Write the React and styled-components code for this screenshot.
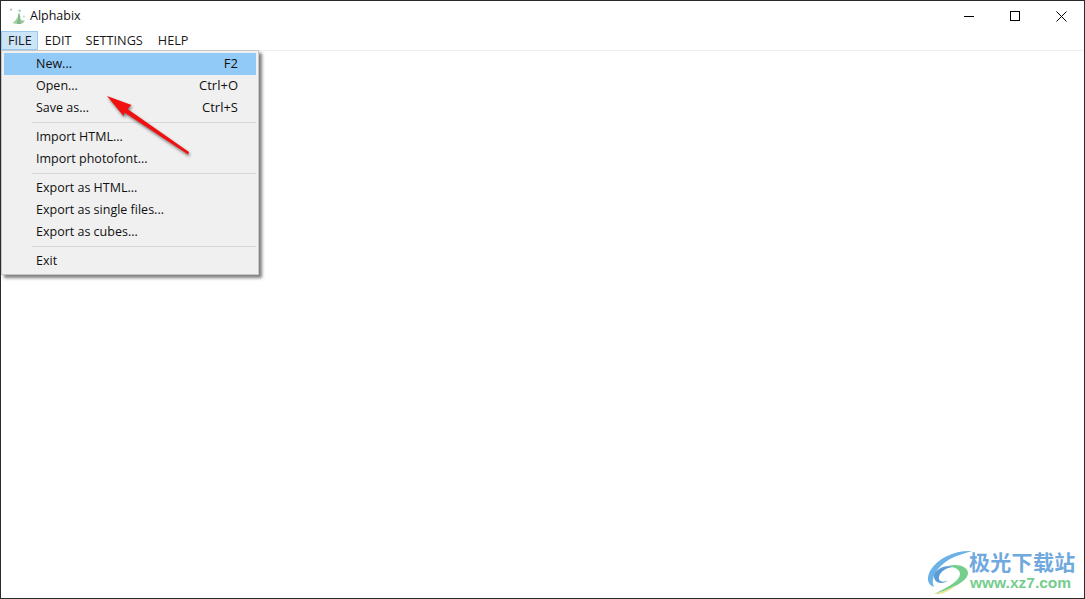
import React from "react";
import styled, { createGlobalStyle } from "styled-components";

const Global = createGlobalStyle`
  html, body { margin: 0; padding: 0; background: #fff; overflow: hidden; }
  * { box-sizing: border-box; }
`;

const Win = styled.div`
  position: relative;
  width: 1085px;
  height: 599px;
  background: #fff;
  border: 1px solid #2b2b2b;
  font-family: "Open Sans", "Noto Sans", sans-serif;
  font-size: 12.5px;
  color: #1a1a1a;
  overflow: hidden;
`;
const TitleBar = styled.header`
  display: flex;
  align-items: center;
  height: 30px;
`;
const AppIcon = styled.svg`
  width: 17px;
  height: 17px;
  margin-left: 8px;
  margin-top: 1px;
`;
const Title = styled.span`
  margin-left: 4px;
  margin-top: -1px;
  font-size: 12.5px;
  color: #111;
`;
const WinButtons = styled.div`
  margin-left: auto;
  display: flex;
`;
const WinButton = styled.div`
  width: 46px;
  height: 30px;
  display: flex;
  align-items: center;
  justify-content: center;
`;
const MenuBar = styled.nav`
  display: flex;
  height: 20px;
  border-bottom: 1px solid #f0f0f0;
  font-size: 12.7px;
`;
const MenuTitle = styled.div`
  height: 19px;
  line-height: 19px;
  padding: 0 ${(p) => p.$right ?? 7}px 0 7px;
  background: ${(p) => (p.$open ? "#cce4f7" : "transparent")};
  box-shadow: ${(p) => (p.$open ? "inset 0 0 0 1px #98c8ee" : "none")};
`;
const Popup = styled.div`
  position: absolute;
  left: 0;
  top: 49px;
  width: 258px;
  height: 225px;
  padding: 2px;
  background: #f0f0f0;
  border: 1px solid #c8c8c8;
  box-shadow: 3px 3px 3px rgba(0, 0, 0, 0.5);
`;
const Item = styled.div`
  display: flex;
  justify-content: space-between;
  align-items: center;
  height: 22px;
  padding: 0 18px 2px 32px;
  background: ${(p) => (p.$active ? "#91c9f7" : "transparent")};
  color: #111;
`;
const Shortcut = styled.span`
  font-size: 13px;
`;
const Sep = styled.div`
  height: 7px;
  margin-left: 28px;
  display: flex;
  align-items: center;
  &::before {
    content: "";
    flex: 1;
    height: 1px;
    background: #d7d7d7;
  }
`;
const Arrow = styled.svg`
  position: absolute;
  left: 90px;
  top: 80px;
  width: 115px;
  height: 90px;
  filter: drop-shadow(1px 2px 1.5px rgba(0, 0, 0, 0.5));
`;
const Watermark = styled.div`
  position: absolute;
  left: 925px;
  top: 548px;
  width: 155px;
  height: 46px;
`;
const Swirl = styled.svg`
  position: absolute;
  left: 0;
  top: 0;
  width: 50px;
  height: 46px;
`;
const WmTitle = styled.div`
  position: absolute;
  left: 43px;
  top: -1px;
  font-family: "Noto Sans CJK SC", sans-serif;
  font-size: 21px;
  line-height: 27px;
  font-weight: 700;
  letter-spacing: 0.3px;
  color: #6fa9dd;
  white-space: nowrap;
`;
const WmUrl = styled.div`
  position: absolute;
  left: 44px;
  top: 25px;
  font-family: "Liberation Sans", sans-serif;
  font-size: 15.5px;
  line-height: 17px;
  font-weight: 700;
  color: #74cd8d;
  white-space: nowrap;
`;

const groups = [
  [["New...", "F2", true], ["Open...", "Ctrl+O"], ["Save as...", "Ctrl+S"]],
  [["Import HTML..."], ["Import photofont..."]],
  [["Export as HTML..."], ["Export as single files..."], ["Export as cubes..."]],
  [["Exit"]],
];

export default function App() {
  return (
    <Win>
      <Global />
      <TitleBar>
        <AppIcon viewBox="0 0 16 16">
          <path d="M7 15 L9 5 L10 5 L11.5 15 Z" fill="#7fb98a" />
          <path d="M3 14 Q6 13 8 8 Q8 13 7 15 Z" fill="#a4cfa0" />
          <path d="M10 10 Q12 12 15 12 Q13 15 11 15 Z" fill="#9cc7a0" />
          <circle cx="2" cy="1.5" r="1" fill="#b9b9b9" />
          <circle cx="10" cy="2.5" r="1.2" fill="#9fd3b0" />
          <circle cx="14" cy="8" r="1" fill="#b7dcc0" />
        </AppIcon>
        <Title>Alphabix</Title>
        <WinButtons>
          <WinButton>
            <svg width="10" height="10" viewBox="0 0 10 10"><path d="M0 5.5H10" stroke="#000" /></svg>
          </WinButton>
          <WinButton>
            <svg width="10" height="10" viewBox="0 0 10 10"><rect x=".5" y=".5" width="9" height="9" fill="none" stroke="#000" /></svg>
          </WinButton>
          <WinButton>
            <svg width="11" height="11" viewBox="0 0 11 11"><path d="M.5 .5L10.5 10.5M10.5 .5L.5 10.5" stroke="#000" strokeWidth="1" /></svg>
          </WinButton>
        </WinButtons>
      </TitleBar>
      <MenuBar>
        <MenuTitle $open $right={6}>FILE</MenuTitle>
        <MenuTitle>EDIT</MenuTitle>
        <MenuTitle $right={8}>SETTINGS</MenuTitle>
        <MenuTitle>HELP</MenuTitle>
      </MenuBar>
      <Popup>
        {groups.map((g, i) => (
          <React.Fragment key={i}>
            {i > 0 && <Sep />}
            {g.map(([label, key, active]) => (
              <Item key={label} $active={active}>
                <span>{label}</span>
                {key && <Shortcut>{key}</Shortcut>}
              </Item>
            ))}
          </React.Fragment>
        ))}
      </Popup>
      <Arrow viewBox="0 0 115 90">
        <path
          d="M16 15 L40.5 24 L36.5 28 L98 71 L97 73.5 L33.5 31.5 L32.5 35 Z"
          fill="#f01010"
        />
      </Arrow>
      <Watermark>
        <Swirl viewBox="0 0 50 46">
          <path d="M46 2 C30 1 12 8 4 22 C0 30 2 36 8 38 C4 30 10 18 24 10 C32 6 40 4 46 2 Z" fill="#6db2e6" />
          <path d="M8 26 C10 20 20 15 28 18 C22 18 14 22 13 28 C12 33 18 34 22 31 C18 36 7 35 8 26 Z" fill="#5b9bd8" />
          <path d="M22 17 C32 14 42 18 42 24 C42 32 26 40 8 45 C22 38 34 32 34 25 C34 20 28 18 22 17 Z" fill="#74cf8c" />
          <path d="M8 45 C16 43 24 40 30 36 C24 42 16 46 8 45 Z" fill="#e8e48a" />
        </Swirl>
        <WmTitle>极光下载站</WmTitle>
        <WmUrl>www.xz7.com</WmUrl>
      </Watermark>
    </Win>
  );
}
